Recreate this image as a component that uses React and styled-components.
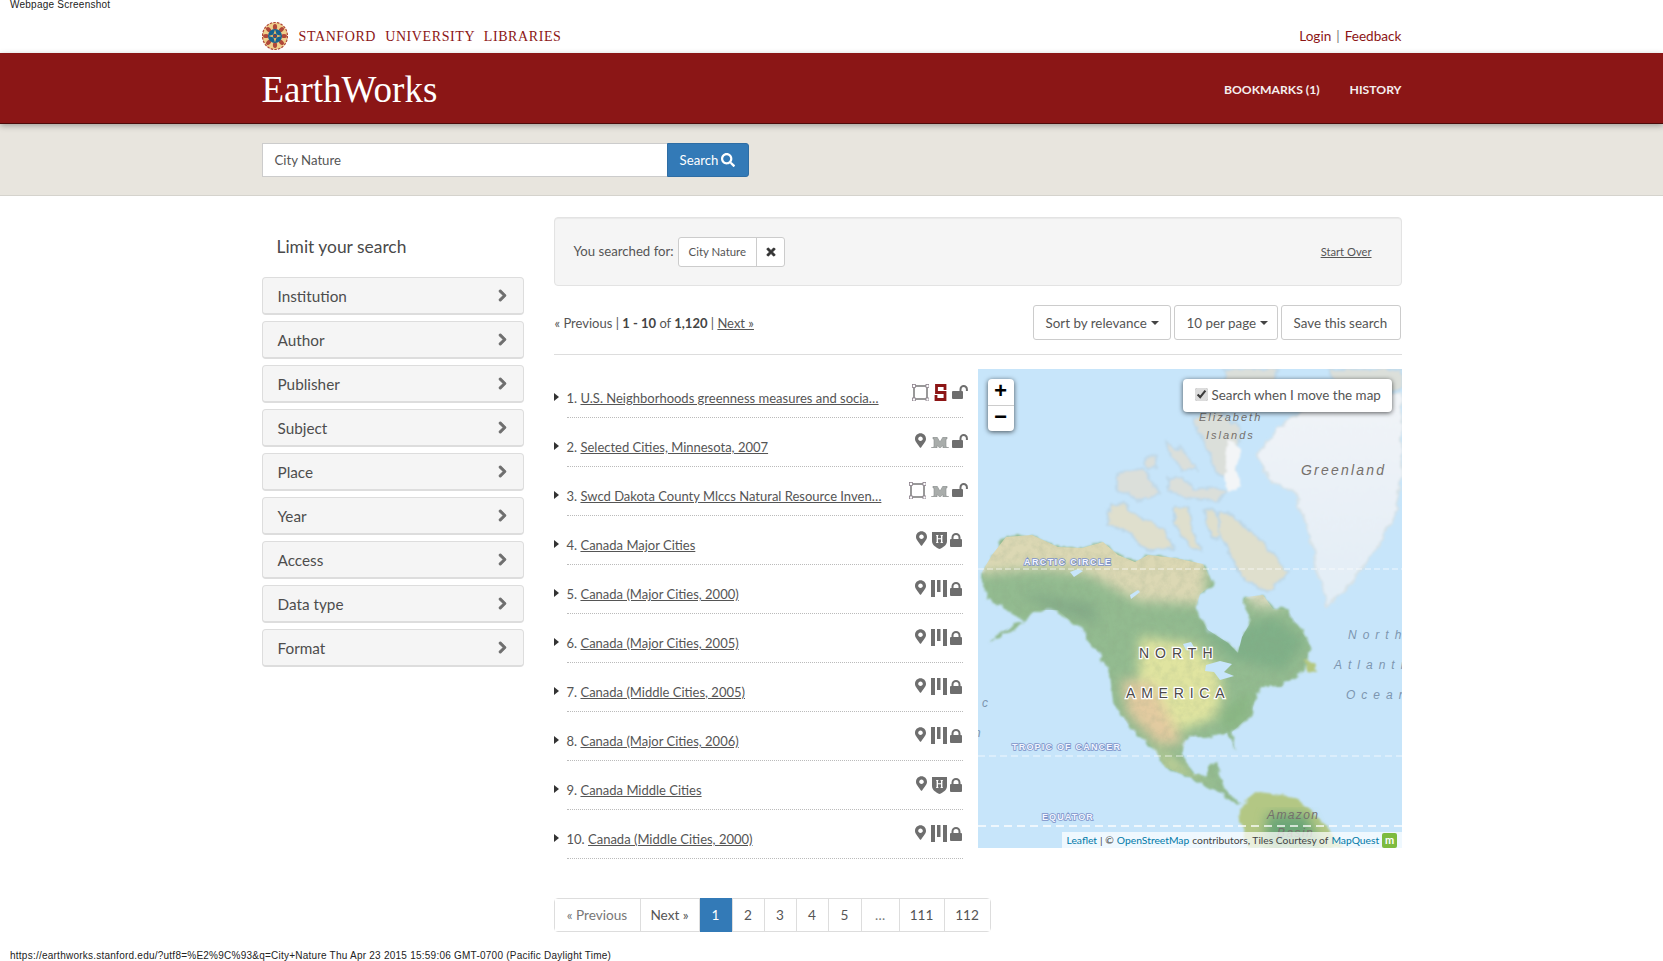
import styled, { createGlobalStyle } from 'styled-components'
import { FaSearch, FaChevronRight, FaTimes, FaMapMarkerAlt } from 'react-icons/fa'

const sans = `Lato, "Noto Sans", sans-serif`

const Global = createGlobalStyle`
html, body {
    margin:0;
    padding:0;
    background:#fff;
    height:961px;
    overflow:hidden;
}
body {
    font-family:${sans};
    font-size:13.2px;
    color:#555;
}
* { box-sizing:border-box; }
a { color:inherit; }
`

const PrintLine = styled.div`
font-family:"Liberation Sans", Arial, sans-serif;
font-size:10px;
line-height:10px;
letter-spacing:.24px;
color:#222;
padding-left:10px;
white-space:nowrap;
`

const Container = styled.div`
width:1140px;
margin:0 auto;
display:flex;
align-items:center;
justify-content:space-between;
`

const TopBar = styled(Container)`
height:43px;
padding-top:9px;
`

const Brand = styled.div`
display:flex;
align-items:center;
gap:11px;
`

const BrandName = styled.span`
font-family:"Liberation Serif", serif;
font-size:14px;
letter-spacing:.6px;
word-spacing:5px;
color:#8c1515;
padding-top:2px;
`

const TopLinks = styled.div`
color:#8c1515;
font-size:13.6px;
a { text-decoration:none; }
span { margin:0 5px; color:#777; }
`

const RedBand = styled.div`
background:#8b1616;
height:71px;
border-bottom:1px solid #4c0a0a;
box-shadow:0 2px 6px rgba(0,0,0,.3);
position:relative;
`

const RedInner = styled(Container)`
height:70px;
padding-top:2px;
`

const Logo = styled.div`
font-family:"Liberation Serif", serif;
font-size:37px;
color:#fff;
`

const NavLinks = styled.div`
display:flex;
gap:30px;
color:#f5eeee;
font-weight:700;
font-size:12.2px;
`

const SearchBand = styled.div`
background:#e8e5de;
height:72px;
border-bottom:1px solid #d5d3cd;
`

const SearchInner = styled(Container)`
height:70px;
justify-content:flex-start;
padding-top:1px;
`

const SearchInput = styled.div`
width:405px;
height:34px;
background:#fff;
border:1px solid #ccc;
border-right:none;
padding:0 12px;
line-height:32px;
color:#555;
`

const SearchButton = styled.div`
width:82px;
height:34px;
background:#337ab7;
border:1px solid #2e6da4;
border-radius:0 3px 3px 0;
color:#fff;
display:flex;
align-items:center;
justify-content:center;
gap:3px;
`

const Main = styled.div`
width:1140px;
margin:0 auto;
display:flex;
gap:30px;
padding-top:21px;
`

const Sidebar = styled.div`
width:262px;
flex:none;
`

const SideTitle = styled.div`
font-size:17.4px;
color:#4a4a4a;
padding:0 0 14px 15px;
line-height:32px;
margin-top:14px;
`

const Facet = styled.div`
height:38px;
margin-bottom:6px;
background:#f5f5f5;
border:1px solid #ddd;
border-bottom-width:2px;
border-radius:4px;
padding:0 15px;
display:flex;
align-items:center;
justify-content:space-between;
font-size:15.3px;
color:#4d4d4d;
svg { color:#6e6e6e; font-size:13px; margin-right:-1px; stroke:currentColor; stroke-width:40; }
`

const Content = styled.div`
width:848px;
flex:none;
`

const Constraints = styled.div`
height:69px;
background:#f5f5f5;
border:1px solid #e3e3e3;
border-radius:4px;
display:flex;
align-items:center;
padding:0 29px 0 19px;
box-shadow:inset 0 1px 1px rgba(0,0,0,.05);
`

const SearchedLabel = styled.span`
margin-right:4px;
margin-top:-2px;
`

const Chip = styled.div`
display:flex;
height:30px;
background:#fff;
border:1px solid #ccc;
border-radius:3px;
align-items:center;
font-size:11.4px;
margin-top:1px;
`

const ChipText = styled.span`
padding:0 10px;
line-height:28px;
`

const ChipClose = styled.span`
width:28px;
height:28px;
border-left:1px solid #ccc;
display:flex;
align-items:center;
justify-content:center;
color:#333;
font-size:12px;
svg { stroke:currentColor; stroke-width:30; }
`

const StartOver = styled.a`
margin-left:auto;
font-size:11.2px;
text-decoration:underline;
`

const Toolbar = styled.div`
height:69px;
padding:5px 1px 0;
border-bottom:1px solid #ddd;
display:flex;
align-items:center;
justify-content:space-between;
`

const PageInfo = styled.div`
font-size:13px;
b { color:#444; }
a { text-decoration:underline; }
`

const Tools = styled.div`
display:flex;
gap:3px;
font-size:13.4px;
`

const ToolButton = styled.div`
height:35px;
padding:0 12px;
border:1px solid #ccc;
border-radius:3px;
display:flex;
align-items:center;
gap:4px;
white-space:nowrap;
width:${p => p.$w}px;
`

const Caret = styled.span`
display:inline-block;
width:0;
height:0;
border-left:4px solid transparent;
border-right:4px solid transparent;
border-top:4px solid #444;
`

const ResultArea = styled.div`
display:flex;
margin-top:14px;
gap:15px;
`

const Results = styled.div`
width:409px;
flex:none;
`

const Row = styled.div`
display:flex;
align-items:flex-start;
height:49px;
`

const RowCaret = styled.span`
width:13px;
flex:none;
height:100%;
display:flex;
align-items:flex-end;
padding-bottom:17px;
&::before {
    content:"";
    border-top:4px solid transparent;
    border-bottom:4px solid transparent;
    border-left:5px solid #333;
}
`

const RowBody = styled.div`
flex:1;
height:100%;
min-width:0;
display:flex;
justify-content:space-between;
border-bottom:1px dotted #bbb;
`

const RowTitle = styled.div`
width:325px;
align-self:flex-end;
padding-bottom:11px;
font-size:13px;
white-space:nowrap;
a { text-decoration:underline; }
`

const Icons = styled.div`
display:flex;
align-items:flex-start;
justify-content:flex-end;
padding:15px 1px 0 0;
margin-right:${p => (p.$open ? -6 : 0)}px;
color:#6e6e6e;
flex:none;
`

const OrgSlot = styled.span`
display:flex;
margin:0 3px 0 5px;
`

const MapBox = styled.div`
position:relative;
width:424px;
height:479px;
overflow:hidden;
background:#c7e5fa;
`

const MapArt = styled.svg`
display:block;
`

const ZoomControl = styled.div`
position:absolute;
left:10px;
top:10px;
width:26px;
background:#fff;
border-radius:4px;
box-shadow:0 1px 5px rgba(0,0,0,.65);
`

const ZoomButton = styled.div`
height:26px;
display:flex;
align-items:center;
justify-content:center;
font-family:"Liberation Mono", monospace;
font-weight:700;
font-size:22px;
color:#000;
& + & { border-top:1px solid #ccc; }
`

const MoveBox = styled.label`
position:absolute;
top:10px;
right:10px;
width:209px;
height:33px;
background:#fff;
border-radius:4px;
box-shadow:0 1px 5px rgba(0,0,0,.65);
display:flex;
align-items:center;
gap:3px;
padding:0 0 2px 12px;
font-size:13.4px;
color:#555;
white-space:nowrap;
input { margin:0 1px 0 0; width:13px; height:13px; accent-color:#dcdcdc; }
`

const Attribution = styled.div`
position:absolute;
right:0;
bottom:0;
height:16px;
width:340px;
background:rgba(255,255,255,.72);
display:flex;
align-items:center;
gap:3px;
padding:0 6px 0 5px;
font-size:10.3px;
color:#444;
white-space:nowrap;
a { color:#0078a8; text-decoration:none; }
`

const MqBadge = styled.span`
flex:none;
width:15px;
height:15px;
border-radius:2px;
background:#7dbb3f;
color:#fff;
font-size:11px;
font-weight:700;
line-height:13px;
text-align:center;
margin-left:auto;
`

const Pagination = styled.div`
display:inline-flex;
margin-top:39px;
height:34px;
border:1px solid #ddd;
border-radius:4px;
font-size:13.6px;
`

const PageItem = styled.span`
display:flex;
align-items:center;
justify-content:center;
width:${p => p.$w}px;
border-left:${p => (p.$first ? 'none' : '1px solid #ddd')};
background:${p => (p.$active ? '#337ab7' : '#fff')};
color:${p => (p.$active ? '#fff' : p.$muted ? '#777' : '#555')};
margin:${p => (p.$active ? '-1px 0' : '0')};
`

const FootLine = styled(PrintLine)`
position:absolute;
left:0;
top:951px;
`

const Seal = () => (
    <svg width="26" height="28" viewBox="0 0 26 28">
        <ellipse cx="13" cy="14" rx="12.5" ry="13.5" fill="#f0cf8c" stroke="#b0483a" strokeWidth="1.2" strokeDasharray="2.5 1.2" />
        {[0, 45, 90, 135, 180, 225, 270, 315].map(a => (
            <ellipse key={a} cx="13" cy="5" rx="2.1" ry="2.9" fill="#b0483a" transform={`rotate(${a} 13 14)`} />
        ))}
        <circle cx="13" cy="14" r="7" fill="#17628f" />
        <path d="M13 7.500l1.600 4.900 4.900 1.600-4.900 1.600L13 20.500l-1.600-4.900L6.500 14l4.900-1.600z" fill="#e9b765" />
        <circle cx="13" cy="14" r="2.200" fill="#1e5f8a" />
        <circle cx="13" cy="14" r="1.200" fill="#a8322b" />
    </svg>
)

const BoxIcon = () => (
    <svg width="17" height="17" viewBox="0 0 17 17">
        <rect x="2" y="2" width="13" height="13" fill="none" stroke="#6e6e6e" strokeWidth="1.4" />
        {[[0, 0], [13.5, 0], [0, 13.5], [13.5, 13.5]].map(([x, y]) => (
            <rect key={x + '-' + y} x={x + .5} y={y + .5} width="3" height="3" fill="#fff" stroke="#8a7f8a" strokeWidth=".8" />
        ))}
    </svg>
)

const PinIcon = () => <FaMapMarkerAlt size={15} style={{ width: 11 }} />

const StanfordIcon = () => (
    <svg width="15" height="17" viewBox="0 0 15 17">
        <path d="M11 6V1.500H2.500V8.500H11V15.500H2V11" fill="none" stroke="#8c1515" strokeWidth="2.800" />
    </svg>
)

const MinnIcon = () => (
    <svg width="18" height="11" viewBox="0 0 18 11" style={{ marginTop: 4 }}>
        <path d="M0 11l3-1V2H2V0h4l3 5 3-5h4v2h-1v8l3 1h-6V8.500L9 11 6 8.500V11z" fill="#a9adab" stroke="#8b8f8f" strokeWidth=".6" />
    </svg>
)

const HarvardIcon = () => (
    <svg width="15" height="17" viewBox="0 0 15 17" style={{ marginTop: 1 }}>
        <path d="M0 0h15v9c0 4-4 6.500-7.500 8C4 15.500 0 13 0 9z" fill="#6e6e6e" />
        <path d="M4 3h2.500v.8h-.5v2.400h3V3.800h-.5V3H11v.8h-.6v6.400h.6V11H8.500v-.8H9V7.300H6v2.900h.5V11H4v-.8h.6V3.800H4z" fill="#fff" />
    </svg>
)

const MitIcon = () => (
    <svg width="16" height="17" viewBox="0 0 16 17">
        <path d="M0 0h4v17H0zM6 0h3.500v12H6zM12 0h4v17h-4z" fill="#6e6e6e" />
    </svg>
)

const ClosedLock = () => (
    <svg width="12" height="14" viewBox="0 0 12 14" style={{ marginTop: 2 }}>
        <path d="M2.500 7V4.500a3.500 3.500 0 0 1 7 0V7" fill="none" stroke="#6e6e6e" strokeWidth="2" />
        <rect x="0" y="6" width="12" height="8" rx="1" fill="#6e6e6e" />
    </svg>
)

const OpenLock = () => (
    <svg width="16" height="14" viewBox="0 0 16 14" style={{ marginTop: 1 }}>
        <path d="M8.500 7V4.200a3.200 3.200 0 0 1 6.400 0V6" fill="none" stroke="#6e6e6e" strokeWidth="2" />
        <rect x="0" y="6" width="11" height="8" rx="1" fill="#6e6e6e" />
    </svg>
)

const rows = [
    { n: 1, title: 'U.S. Neighborhoods greenness measures and socia…', shape: 'box', org: 'stanford', open: true },
    { n: 2, title: 'Selected Cities, Minnesota, 2007', shape: 'pin', org: 'minn', open: true },
    { n: 3, title: 'Swcd Dakota County Mlccs Natural Resource Inven…', shape: 'box', org: 'minn', open: true },
    { n: 4, title: 'Canada Major Cities', shape: 'pin', org: 'harvard' },
    { n: 5, title: 'Canada (Major Cities, 2000)', shape: 'pin', org: 'mit' },
    { n: 6, title: 'Canada (Major Cities, 2005)', shape: 'pin', org: 'mit' },
    { n: 7, title: 'Canada (Middle Cities, 2005)', shape: 'pin', org: 'mit' },
    { n: 8, title: 'Canada (Major Cities, 2006)', shape: 'pin', org: 'mit' },
    { n: 9, title: 'Canada Middle Cities', shape: 'pin', org: 'harvard' },
    { n: 10, title: 'Canada (Middle Cities, 2000)', shape: 'pin', org: 'mit' },
]

const orgIcons = { stanford: StanfordIcon, minn: MinnIcon, harvard: HarvardIcon, mit: MitIcon }

const facets = ['Institution', 'Author', 'Publisher', 'Subject', 'Place', 'Year', 'Access', 'Data type', 'Format']

const pages = [
    { t: '« Previous', w: 85, muted: true, first: true },
    { t: 'Next »', w: 59 },
    { t: '1', w: 33, active: true },
    { t: '2', w: 32 },
    { t: '3', w: 32 },
    { t: '4', w: 32 },
    { t: '5', w: 33 },
    { t: '…', w: 38, muted: true },
    { t: '111', w: 45 },
    { t: '112', w: 46 },
]

const mainland = "M4 203L14 186 28 168 54 166 80 178 104 179 125 173 140 186 157 193 170 186 197 189 225 195 235 215 222 225 217 241 230 261 250 274 260 284 264 268 274 251 264 234 268 228 285 226 295 240 310 241 333 278 322 304 303 318 284 318 277 328 274 344 254 363 257 381 249 364 227 368 210 368 204 384 214 404 230 408 230 398 239 394 247 421 264 434 257 434 237 421 214 409 187 398 174 378 154 361 135 334 132 304 120 284 100 258 80 241 57 241 40 258 10 274 30 258 47 251 10 231z"

const MapDrawing = () => (
    <MapArt width="424" height="479" viewBox="0 0 424 479">
        <defs>
            <filter id="coast" x="-5%" y="-5%" width="110%" height="110%">
                <feTurbulence type="fractalNoise" baseFrequency="0.09" numOctaves="3" seed="4" result="noise" />
                <feDisplacementMap in="SourceGraphic" in2="noise" scale="9" xChannelSelector="R" yChannelSelector="G" />
                <feGaussianBlur stdDeviation="1.1" />
            </filter>
            <filter id="soft" x="-20%" y="-20%" width="140%" height="140%">
                <feGaussianBlur stdDeviation="6" />
            </filter>
            <filter id="relief" x="0" y="0" width="100%" height="100%">
                <feTurbulence type="fractalNoise" baseFrequency="0.13" numOctaves="4" seed="9" />
                <feColorMatrix values="0 0 0 0 .25  0 0 0 0 .35  0 0 0 0 .22  1.6 0 0 0 -.62" />
            </filter>
            <clipPath id="land">
                <path d={mainland} />
            </clipPath>
            <linearGradient id="ice" x1="0" y1="0" x2="0" y2="1">
                <stop offset="0" stopColor="#f1f4f8" />
                <stop offset="1" stopColor="#e2edf6" />
            </linearGradient>
        </defs>

        <g filter="url(#coast)">
            {/* arctic islands */}
            <g fill="#dfdfcd" stroke="#bcd7e8" strokeWidth="2">
                <path d="M132 136L147 133 157 146 184 159 197 179 170 183 154 166 130 156z" />
                <path d="M197 139L210 136 214 156 224 183 210 176 197 156z" />
                <path d="M226 143L236 140 246 165 238 172 228 160z" />
                <path d="M240 143L250 143 274 163 297 186 310 203 290 223 264 209 250 183 240 163z" />
            </g>
            <g fill="#dbdfda" stroke="#bfd9ea" strokeWidth="2">
                <path d="M140 106L165 100 182 125 160 132 140 122z" />
                <path d="M190 110L205 108 215 120 232 118 250 122 240 132 210 130 190 122z" />
                <path d="M188 72L205 82 218 100 205 100 192 90z" />
                <path d="M166 90L178 86 180 98 170 100z" />
                <path d="M215 50L240 40 262 60 258 85 258 108 240 108 232 85 222 65z" />
                <path d="M245 0L300 0 292 22 262 25 248 15z" />
                <path d="M350 0H424V20L395 28 365 22z" />
            </g>
            <path d="M250 72L264 80 258 100 264 116 250 124 246 100z" fill="#f3f5f7" />
            <path d="M280 86L300 59 330 39 364 33 424 25V103L417 146 397 183 364 226 350 236 344 216 334 176 327 153 317 123 294 113 280 89z" fill="url(#ice)" stroke="#d8e2e6" strokeWidth="2" />
            {/* mainland */}
            <path d={mainland} fill="#93bb90" />
            <path d="M325 291L338 293 341 304 328 303z" fill="#b4c77f" />
            <path d="M260 438L280 423 317 428 340 448 364 479H270L265 465z" fill="#b3c784" />
        </g>

        <g clipPath="url(#land)">
            <g filter="url(#soft)">
                <path d="M0 150H235L225 235 160 232 110 205 60 200 0 205z" fill="#dcd8b4" />
                <path d="M262 215H305L305 238 275 238z" fill="#d9d9bc" />
                <path d="M162 268L215 275 240 300 245 325 235 350 200 362 170 345 160 315z" fill="#e0e4a0" />
                <path d="M143 310L175 315 190 345 205 375 180 375 150 345z" fill="#e3cba0" />
                <path d="M175 375L200 395 240 420 220 410 190 400z" fill="#cfd698" />
                <path d="M175 240L215 250 255 290 305 302 328 272 295 248 250 262z" fill="#80b088" />
                <path d="M240 345L275 320 268 350 250 365z" fill="#8ab884" />
                <path d="M40 222L115 235 130 285 120 255 70 240z" fill="#84ab88" />
            </g>
            <rect x="0" y="150" width="340" height="290" filter="url(#relief)" opacity=".22" />
        </g>

        <g filter="url(#soft)">
            <path d="M290 445L328 445 345 479H285z" fill="#6ca677" />
        </g>

        {/* water */}
        <g fill="#c7e5fa">
            <path d="M228 296l14-4 12 3-8 8 10 4-14 4-6-8-9-1z" />
            <path d="M205 275l8-2 3 5-8 3z" />
            <path d="M92 203l8-3 5 2-9 6z" />
            <path d="M152 226l8-5 2 2-9 7z" />
        </g>

        {/* graticule */}
        <g stroke="#fff" opacity=".7">
            <line x1="0" x2="424" y1="200" y2="200" strokeWidth="1" strokeDasharray="6 3" />
            <line x1="0" x2="424" y1="387" y2="387" strokeWidth="1" strokeDasharray="7 4" />
            <line x1="0" x2="424" y1="457" y2="457" strokeWidth="2" strokeDasharray="8 5" />
        </g>

        {/* place labels */}
        <g fontFamily='"Liberation Sans", sans-serif'>
            <g fontSize="9" fontWeight="700" letterSpacing="1.4" fill="#f3f6ff" stroke="#7d93c9" strokeWidth="1.6" paintOrder="stroke">
                <text x="46" y="196">ARCTIC CIRCLE</text>
                <text x="34" y="381" letterSpacing="1.2">TROPIC OF CANCER</text>
                <text x="64" y="451" letterSpacing="1.1">EQUATOR</text>
            </g>
            <g fontSize="11" fontStyle="italic" letterSpacing="2" fill="#75706c">
                <text x="221" y="52">Elizabeth</text>
                <text x="228" y="70">Islands</text>
                <text x="323" y="106" fontSize="14" letterSpacing="2.2">Greenland</text>
                <text x="289" y="450" letterSpacing="1.4" fontSize="12">Amazon</text>
                <text x="299" y="468" letterSpacing="1.4" fontSize="12">Basin</text>
            </g>
            <g fontSize="14" fill="#4d4a4a" stroke="#fff" strokeWidth="2.4" paintOrder="stroke">
                <text x="161" y="289" letterSpacing="6">NORTH</text>
                <text x="148" y="329" letterSpacing="5.800">AMERICA</text>
            </g>
            <g fontSize="12" fontStyle="italic" letterSpacing="6" fill="#7d96b0">
                <text x="370" y="270">North</text>
                <text x="356" y="300">Atlantic</text>
                <text x="368" y="330">Ocean</text>
                <text x="4" y="338">c</text>
                <text x="-4" y="368">n</text>
            </g>
        </g>
    </MapArt>
)

export default function App() {
    return (
        <>
            <Global />
            <PrintLine>Webpage Screenshot</PrintLine>
            <TopBar>
                <Brand>
                    <Seal />
                    <BrandName>STANFORD UNIVERSITY LIBRARIES</BrandName>
                </Brand>
                <TopLinks><a href="#">Login</a><span>|</span><a href="#">Feedback</a></TopLinks>
            </TopBar>
            <RedBand>
                <RedInner>
                    <Logo>EarthWorks</Logo>
                    <NavLinks><span>BOOKMARKS (1)</span><span>HISTORY</span></NavLinks>
                </RedInner>
            </RedBand>
            <SearchBand>
                <SearchInner>
                    <SearchInput>City Nature</SearchInput>
                    <SearchButton>Search <FaSearch size={14} /></SearchButton>
                </SearchInner>
            </SearchBand>
            <Main>
                <Sidebar>
                    <SideTitle>Limit your search</SideTitle>
                    {facets.map(f => (
                        <Facet key={f}>{f}<FaChevronRight /></Facet>
                    ))}
                </Sidebar>
                <Content>
                    <Constraints>
                        <SearchedLabel>You searched for:</SearchedLabel>
                        <Chip>
                            <ChipText>City Nature</ChipText>
                            <ChipClose><FaTimes /></ChipClose>
                        </Chip>
                        <StartOver href="#">Start Over</StartOver>
                    </Constraints>
                    <Toolbar>
                        <PageInfo>« Previous | <b>1 - 10</b> of <b>1,120</b> | <a href="#">Next »</a></PageInfo>
                        <Tools>
                            <ToolButton $w={138}>Sort by relevance <Caret /></ToolButton>
                            <ToolButton $w={104}>10 per page <Caret /></ToolButton>
                            <ToolButton $w={120}>Save this search</ToolButton>
                        </Tools>
                    </Toolbar>
                    <ResultArea>
                        <Results>
                            {rows.map(r => {
                                const Org = orgIcons[r.org]
                                return (
                                    <Row key={r.n}>
                                        <RowCaret />
                                        <RowBody>
                                            <RowTitle>{r.n}. <a href="#">{r.title}</a></RowTitle>
                                            <Icons $open={r.open}>
                                                {r.shape === 'box' ? <BoxIcon /> : <PinIcon />}
                                                <OrgSlot><Org /></OrgSlot>
                                                {r.open ? <OpenLock /> : <ClosedLock />}
                                            </Icons>
                                        </RowBody>
                                    </Row>
                                )
                            })}
                        </Results>
                        <MapBox>
                            <MapDrawing />
                            <ZoomControl>
                                <ZoomButton>+</ZoomButton>
                                <ZoomButton>−</ZoomButton>
                            </ZoomControl>
                            <MoveBox>
                                <input type="checkbox" defaultChecked />
                                Search when I move the map
                            </MoveBox>
                            <Attribution>
                                <a href="#">Leaflet</a> | © <a href="#">OpenStreetMap</a> contributors, Tiles Courtesy of <a href="#">MapQuest</a>
                                <MqBadge>m</MqBadge>
                            </Attribution>
                        </MapBox>
                    </ResultArea>
                    <Pagination>
                        {pages.map(p => (
                            <PageItem key={p.t} $w={p.w} $active={p.active} $muted={p.muted} $first={p.first}>{p.t}</PageItem>
                        ))}
                    </Pagination>
                </Content>
            </Main>
            <FootLine>https://earthworks.stanford.edu/?utf8=%E2%9C%93&q=City+Nature Thu Apr 23 2015 15:59:06 GMT-0700 (Pacific Daylight Time)</FootLine>
        </>
    )
}
